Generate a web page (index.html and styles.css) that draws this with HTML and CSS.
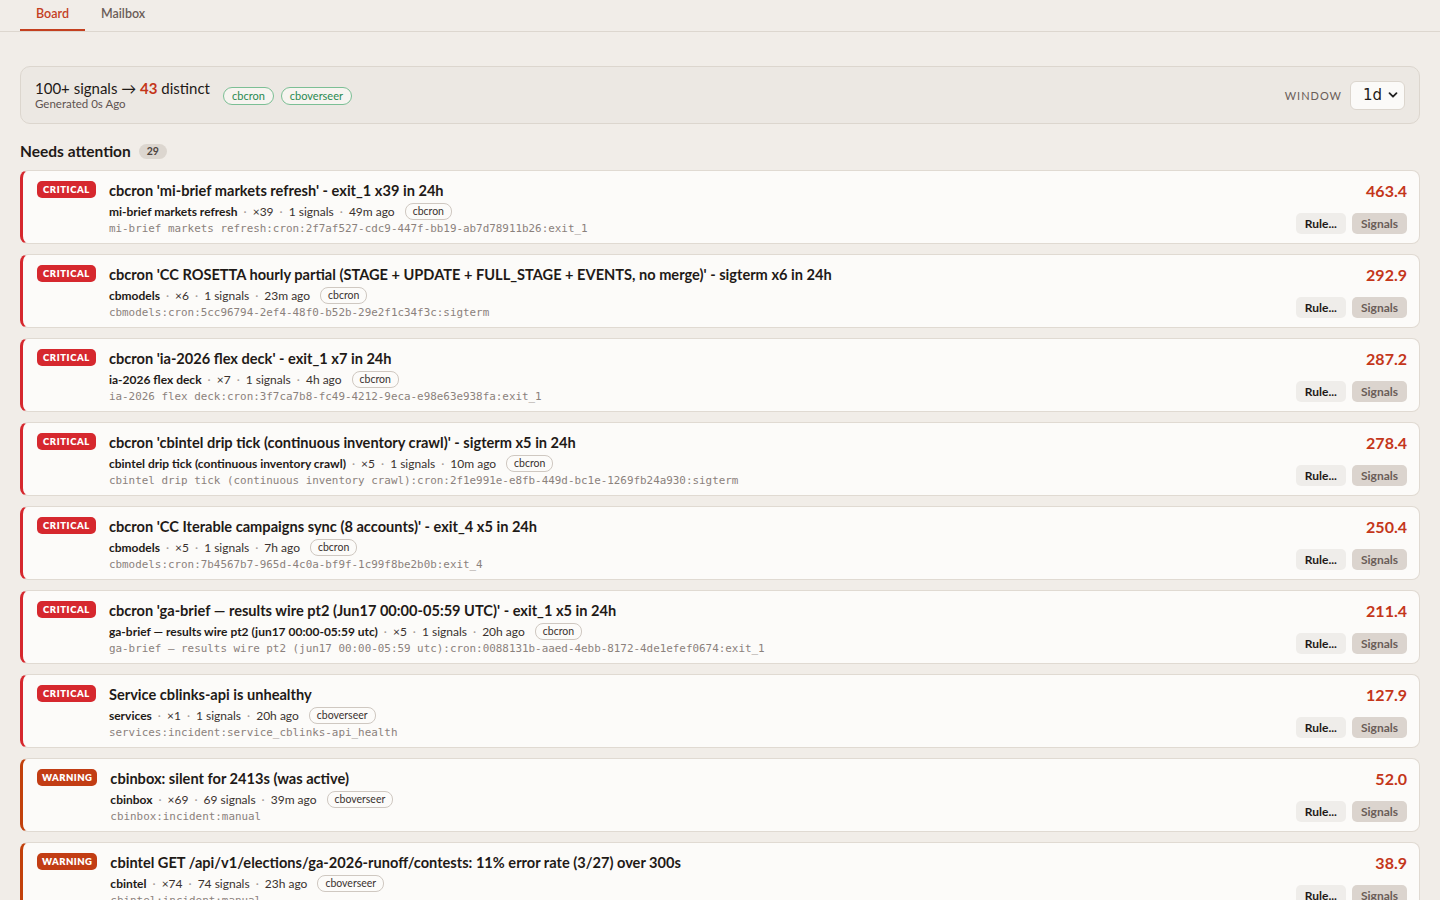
FILE: index.html
```html
<!DOCTYPE html>
<html lang="en">
<head>
<meta charset="utf-8">
<title>Board</title>
<link rel="stylesheet" href="styles.css">
</head>
<body>
<nav class="tabs">
  <a class="tab active">Board</a>
  <a class="tab">Mailbox</a>
</nav>
<main class="page">
  <section class="summary">
    <div class="summary-left">
      <div class="summary-text">
        <div class="summary-title">100+ signals → <b class="hot">43</b> distinct</div>
        <div class="summary-sub">Generated 0s Ago</div>
      </div>
      <div class="src-tags">
        <span class="src-tag">cbcron</span>
        <span class="src-tag">cboverseer</span>
      </div>
    </div>
    <div class="summary-right">
      <span class="win-label">WINDOW</span>
      <div class="select"><span>1d</span>
        <svg width="10" height="10" viewBox="0 0 10 10"><path d="M1.5 3.2 L5 6.7 L8.5 3.2" fill="none" stroke="#222" stroke-width="1.8" stroke-linecap="round" stroke-linejoin="round"/></svg>
      </div>
    </div>
  </section>

  <h2 class="section-head">Needs attention <span class="count">29</span></h2>

  <div class="list">
    <article class="card crit">
      <div class="card-main">
        <span class="badge crit">CRITICAL</span>
        <div class="card-body">
          <div class="title">cbcron 'mi-brief markets refresh' - exit_1 x39 in 24h</div>
          <div class="meta"><b>mi-brief markets refresh</b><i>·</i><span>×39</span><i>·</i><span>1 signals</span><i>·</i><span>49m ago</span><em class="tag">cbcron</em></div>
          <div class="key">mi-brief markets refresh:cron:2f7af527-cdc9-447f-bb19-ab7d78911b26:exit_1</div>
        </div>
      </div>
      <div class="card-side">
        <div class="score">463.4</div>
        <div class="btns"><button class="btn rule">Rule...</button><button class="btn sig">Signals</button></div>
      </div>
    </article>

    <article class="card crit">
      <div class="card-main">
        <span class="badge crit">CRITICAL</span>
        <div class="card-body">
          <div class="title">cbcron 'CC ROSETTA hourly partial (STAGE + UPDATE + FULL_STAGE + EVENTS, no merge)' - sigterm x6 in 24h</div>
          <div class="meta"><b>cbmodels</b><i>·</i><span>×6</span><i>·</i><span>1 signals</span><i>·</i><span>23m ago</span><em class="tag">cbcron</em></div>
          <div class="key">cbmodels:cron:5cc96794-2ef4-48f0-b52b-29e2f1c34f3c:sigterm</div>
        </div>
      </div>
      <div class="card-side">
        <div class="score">292.9</div>
        <div class="btns"><button class="btn rule">Rule...</button><button class="btn sig">Signals</button></div>
      </div>
    </article>

    <article class="card crit">
      <div class="card-main">
        <span class="badge crit">CRITICAL</span>
        <div class="card-body">
          <div class="title">cbcron 'ia-2026 flex deck' - exit_1 x7 in 24h</div>
          <div class="meta"><b>ia-2026 flex deck</b><i>·</i><span>×7</span><i>·</i><span>1 signals</span><i>·</i><span>4h ago</span><em class="tag">cbcron</em></div>
          <div class="key">ia-2026 flex deck:cron:3f7ca7b8-fc49-4212-9eca-e98e63e938fa:exit_1</div>
        </div>
      </div>
      <div class="card-side">
        <div class="score">287.2</div>
        <div class="btns"><button class="btn rule">Rule...</button><button class="btn sig">Signals</button></div>
      </div>
    </article>

    <article class="card crit">
      <div class="card-main">
        <span class="badge crit">CRITICAL</span>
        <div class="card-body">
          <div class="title">cbcron 'cbintel drip tick (continuous inventory crawl)' - sigterm x5 in 24h</div>
          <div class="meta"><b>cbintel drip tick (continuous inventory crawl)</b><i>·</i><span>×5</span><i>·</i><span>1 signals</span><i>·</i><span>10m ago</span><em class="tag">cbcron</em></div>
          <div class="key">cbintel drip tick (continuous inventory crawl):cron:2f1e991e-e8fb-449d-bc1e-1269fb24a930:sigterm</div>
        </div>
      </div>
      <div class="card-side">
        <div class="score">278.4</div>
        <div class="btns"><button class="btn rule">Rule...</button><button class="btn sig">Signals</button></div>
      </div>
    </article>

    <article class="card crit">
      <div class="card-main">
        <span class="badge crit">CRITICAL</span>
        <div class="card-body">
          <div class="title">cbcron 'CC Iterable campaigns sync (8 accounts)' - exit_4 x5 in 24h</div>
          <div class="meta"><b>cbmodels</b><i>·</i><span>×5</span><i>·</i><span>1 signals</span><i>·</i><span>7h ago</span><em class="tag">cbcron</em></div>
          <div class="key">cbmodels:cron:7b4567b7-965d-4c0a-bf9f-1c99f8be2b0b:exit_4</div>
        </div>
      </div>
      <div class="card-side">
        <div class="score">250.4</div>
        <div class="btns"><button class="btn rule">Rule...</button><button class="btn sig">Signals</button></div>
      </div>
    </article>

    <article class="card crit">
      <div class="card-main">
        <span class="badge crit">CRITICAL</span>
        <div class="card-body">
          <div class="title">cbcron 'ga-brief — results wire pt2 (Jun17 00:00-05:59 UTC)' - exit_1 x5 in 24h</div>
          <div class="meta"><b>ga-brief — results wire pt2 (jun17 00:00-05:59 utc)</b><i>·</i><span>×5</span><i>·</i><span>1 signals</span><i>·</i><span>20h ago</span><em class="tag">cbcron</em></div>
          <div class="key">ga-brief — results wire pt2 (jun17 00:00-05:59 utc):cron:0088131b-aaed-4ebb-8172-4de1efef0674:exit_1</div>
        </div>
      </div>
      <div class="card-side">
        <div class="score">211.4</div>
        <div class="btns"><button class="btn rule">Rule...</button><button class="btn sig">Signals</button></div>
      </div>
    </article>

    <article class="card crit">
      <div class="card-main">
        <span class="badge crit">CRITICAL</span>
        <div class="card-body">
          <div class="title">Service cblinks-api is unhealthy</div>
          <div class="meta"><b>services</b><i>·</i><span>×1</span><i>·</i><span>1 signals</span><i>·</i><span>20h ago</span><em class="tag">cboverseer</em></div>
          <div class="key">services:incident:service_cblinks-api_health</div>
        </div>
      </div>
      <div class="card-side">
        <div class="score">127.9</div>
        <div class="btns"><button class="btn rule">Rule...</button><button class="btn sig">Signals</button></div>
      </div>
    </article>

    <article class="card warn">
      <div class="card-main">
        <span class="badge warn">WARNING</span>
        <div class="card-body">
          <div class="title">cbinbox: silent for 2413s (was active)</div>
          <div class="meta"><b>cbinbox</b><i>·</i><span>×69</span><i>·</i><span>69 signals</span><i>·</i><span>39m ago</span><em class="tag">cboverseer</em></div>
          <div class="key">cbinbox:incident:manual</div>
        </div>
      </div>
      <div class="card-side">
        <div class="score">52.0</div>
        <div class="btns"><button class="btn rule">Rule...</button><button class="btn sig">Signals</button></div>
      </div>
    </article>

    <article class="card warn">
      <div class="card-main">
        <span class="badge warn">WARNING</span>
        <div class="card-body">
          <div class="title">cbintel GET /api/v1/elections/ga-2026-runoff/contests: 11% error rate (3/27) over 300s</div>
          <div class="meta"><b>cbintel</b><i>·</i><span>×74</span><i>·</i><span>74 signals</span><i>·</i><span>23h ago</span><em class="tag">cboverseer</em></div>
          <div class="key">cbintel:incident:manual</div>
        </div>
      </div>
      <div class="card-side">
        <div class="score">38.9</div>
        <div class="btns"><button class="btn rule">Rule...</button><button class="btn sig">Signals</button></div>
      </div>
    </article>
  </div>
</main>
</body>
</html>
```

FILE: styles.css
```css
* { box-sizing: border-box; }
html, body { margin: 0; padding: 0; }
body {
  background: #f1ede8;
  font-family: Lato, "Open Sans", sans-serif;
  color: #1f1a17;
}
.tabs {
  display: flex;
  padding: 0 20px;
  height: 32px;
  border-bottom: 1px solid #ddd7cf;
}
.tab {
  display: block;
  padding: 0 16px;
  height: 31px;
  line-height: 27px;
  font-size: 12.5px;
  font-weight: 600;
  color: #6a5d58;
}
.tab.active {
  color: #c4401f;
  border-bottom: 2px solid #c4401f;
}
.page { padding: 34px 20px 0; }
.summary {
  display: flex;
  align-items: center;
  justify-content: space-between;
  height: 58px;
  padding: 0 14px;
  background: #ece8e3;
  border: 1px solid #dcd6ce;
  border-radius: 10px;
}
.summary-left { display: flex; align-items: center; gap: 13px; }
.summary-title { font-size: 15px; line-height: 18px; color: #1f1a17; }
.summary-title .hot { color: #c4361a; font-weight: 700; }
.summary-sub { font-size: 11.5px; line-height: 14px; color: #5e5350; }
.src-tags { display: flex; gap: 7px; margin-top: 2px; }
.src-tag {
  font-size: 11px;
  line-height: 16px;
  padding: 0 8px;
  border: 1px solid #7cbf95;
  border-radius: 9px;
  color: #2b8a50;
  background: #f7f4f0;
}
.summary-right { display: flex; align-items: center; gap: 8px; }
.win-label { font-size: 11px; letter-spacing: 1px; color: #6a5d58; }
.select {
  display: flex;
  align-items: center;
  justify-content: space-between;
  width: 55px;
  height: 29px;
  padding: 0 6px 0 12px;
  background: #fbfaf8;
  border: 1px solid #dcd6ce;
  border-radius: 6px;
  font-family: "DejaVu Sans", sans-serif;
  font-size: 15px;
  color: #1f1a17;
}
.section-head {
  display: flex;
  align-items: center;
  gap: 8px;
  margin: 18px 0 10px;
  font-size: 15.5px;
  line-height: 18px;
  font-weight: 700;
  color: #1f1a17;
}
.count {
  font-size: 10.5px;
  font-weight: 700;
  line-height: 15px;
  padding: 0 8px;
  border-radius: 8px;
  background: #dcd6cf;
  color: #4e4541;
}
.list { display: flex; flex-direction: column; gap: 10px; }
.card {
  display: flex;
  justify-content: space-between;
  height: 74px;
  padding: 10px 12px 9px 14px;
  background: #fcfbf9;
  border: 1px solid #e0dad2;
  border-left: 3px solid #d6282e;
  border-radius: 8px;
}
.card.warn { border-left-color: #c2410c; }
.card-main { display: flex; gap: 13px; min-width: 0; }
.badge {
  flex: none;
  height: 17px;
  padding: 0 6px;
  border-radius: 5px;
  color: #fff;
  font-size: 9.5px;
  font-weight: 800;
  letter-spacing: 0.6px;
  line-height: 17px;
}
.badge.crit { background: #d6282e; }
.badge.warn { background: #c23d14; padding: 0 5px; letter-spacing: 0.45px; }
.card-body { display: flex; flex-direction: column; }
.title { margin-top: 1px; font-size: 14.6px; font-weight: 700; line-height: 18px; color: #1f1a17; white-space: nowrap; }
.meta {
  display: flex;
  align-items: center;
  margin-top: 3px;
  height: 16px;
  font-size: 12px;
  color: #3a322f;
  white-space: nowrap;
}
.meta b { font-weight: 700; color: #1f1a17; }
.meta i { font-style: normal; color: #a79d98; padding: 0 6px; }
.meta .tag {
  margin-left: 10px;
  font-style: normal;
  font-size: 10.5px;
  line-height: 15px;
  padding: 0 7px;
  border: 1px solid #cfc8c1;
  border-radius: 8px;
  color: #3a322f;
}
.key {
  margin-top: 3px;
  font-family: "DejaVu Sans Mono", monospace;
  font-size: 10.9px;
  line-height: 14px;
  color: #8b817c;
  white-space: nowrap;
}
.card-side {
  display: flex;
  flex-direction: column;
  align-items: flex-end;
  justify-content: space-between;
  flex: none;
}
.score { font-size: 16px; font-weight: 700; line-height: 20px; color: #c4361a; }
.btns { display: flex; gap: 6px; }
.btn {
  font-family: inherit;
  height: 21px;
  padding: 0 9px;
  border: none;
  border-radius: 5px;
  font-size: 12px;
  font-weight: 700;
}
.btn.rule { background: #efedea; color: #1f1a17; }
.btn.sig { background: #dbd4ce; color: #6a5d58; }
```
